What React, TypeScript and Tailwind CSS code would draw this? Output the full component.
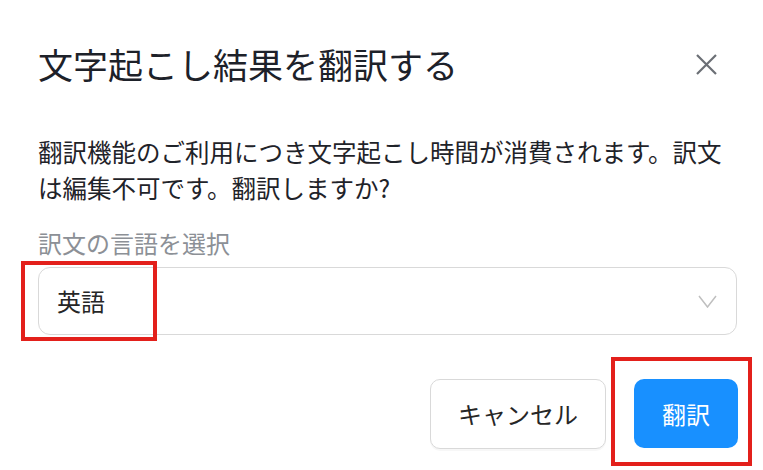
export default function App() {
  return (
    <div
      className="w-[763px] h-[470px] overflow-hidden bg-white pl-[38px] pr-[26px] pt-[43px]"
      style={{ fontFamily: '"Noto Sans CJK JP", "Noto Sans", sans-serif' }}
    >
      {/* Header */}
      <div className="flex items-center justify-between h-[42px]">
        <h2 className="text-[35px] leading-[42px] text-[#1d2129] font-normal whitespace-nowrap">文字起こし結果を翻訳する</h2>
        <button className="mr-[20px] text-[#6b6f75]" aria-label="close">
          <svg width="21" height="21" viewBox="0 0 21 21" fill="none" stroke="currentColor" strokeWidth="2.2">
            <path d="M1 1 L20 20 M20 1 L1 20" />
          </svg>
        </button>
      </div>

      {/* Body */}
      <p className="mt-[49px] text-[24.5px] leading-[36px] text-[#1f2329]">
        翻訳機能のご利用につき文字起こし時間が消費されます。訳文は編集不可です。翻訳しますか?
      </p>

      <div className="mt-[19px] text-[24px] leading-[36px] text-[#8c9096]">訳文の言語を選択</div>

      <div className="relative mt-[6px] h-[68px] border border-[#d9d9d9] rounded-[12px] flex items-center justify-between pl-[18px] pr-[19px]">
        <span className="text-[24px] text-[#262626]">英語</span>
        <svg width="19" height="13" viewBox="0 0 19 13" fill="none" stroke="#bfbfbf" strokeWidth="1.5">
          <polyline points="1,1 9.5,12 18,1" />
        </svg>
        <div className="absolute left-[-18px] top-[-7px] w-[136px] h-[80px] border-4 border-[#e3201b] pointer-events-none" />
      </div>

      {/* Footer */}
      <div className="mt-[44px] flex justify-end gap-[28px]">
        <button className="h-[70px] px-[27px] rounded-[10px] border border-[#d9d9d9] bg-white text-[24px] text-[#262626] shadow-[0_2px_0_rgba(0,0,0,0.03)]">
          キャンセル
        </button>
        <div className="relative mr-[-1px]">
          <button className="h-[69px] px-[28px] rounded-[10px] bg-[#1890ff] text-[24px] text-white">翻訳</button>
          <div className="absolute left-[-23px] top-[-22px] w-[141px] h-[109px] border-4 border-[#e3201b] pointer-events-none" />
        </div>
      </div>
    </div>
  );
}
